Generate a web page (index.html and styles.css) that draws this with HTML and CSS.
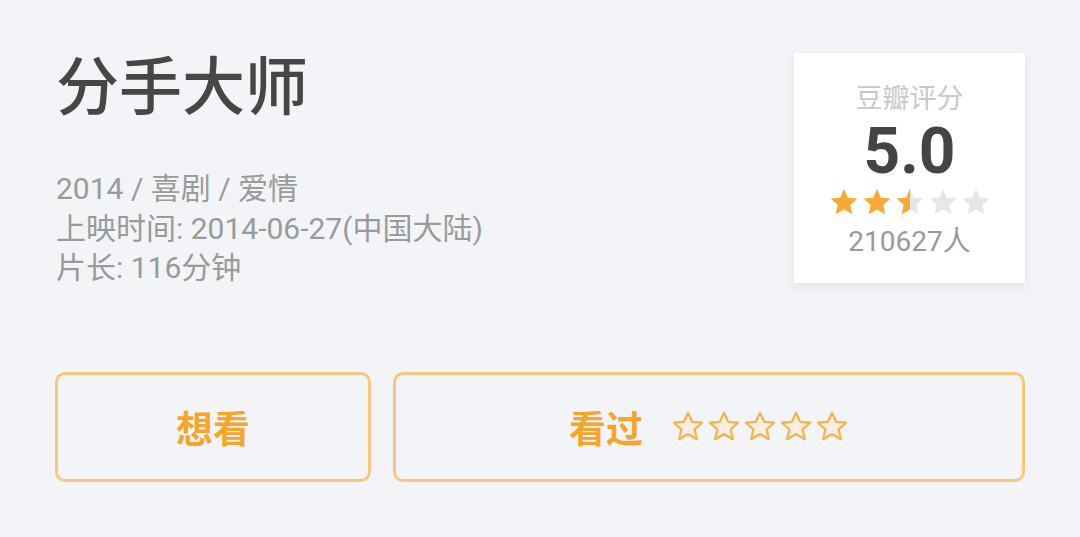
FILE: index.html
```html
<!DOCTYPE html>
<html lang="zh-CN">
<head>
<meta charset="utf-8">
<link rel="stylesheet" href="styles.css">
</head>
<body>
<div class="page">
  <div class="top">
    <div class="info">
      <h1 class="title">分手大师</h1>
      <div class="meta">
        <div class="meta-line">2014 / 喜剧 / 爱情</div>
        <div class="meta-line">上映时间: 2014-06-27(中国大陆)</div>
        <div class="meta-line">片长: 116分钟</div>
      </div>
    </div>
    <div class="card">
      <div class="card-label">豆瓣评分</div>
      <div class="card-score">5.0</div>
      <div class="card-stars">
        <svg class="cstar" viewBox="0 0 24 24"><path class="on" d="M12 1.5l3.1 7 7.6.7-5.7 5.1 1.7 7.5L12 17.9l-6.7 3.9 1.7-7.5L1.3 9.2l7.6-.7z"/></svg>
        <svg class="cstar" viewBox="0 0 24 24"><path class="on" d="M12 1.5l3.1 7 7.6.7-5.7 5.1 1.7 7.5L12 17.9l-6.7 3.9 1.7-7.5L1.3 9.2l7.6-.7z"/></svg>
        <svg class="cstar" viewBox="0 0 24 24"><path class="off" d="M12 1.5l3.1 7 7.6.7-5.7 5.1 1.7 7.5L12 17.9l-6.7 3.9 1.7-7.5L1.3 9.2l7.6-.7z"/><path class="on" d="M12 1.5V17.9l-6.7 3.9 1.7-7.5L1.3 9.2l7.6-.7z"/></svg>
        <svg class="cstar" viewBox="0 0 24 24"><path class="off" d="M12 1.5l3.1 7 7.6.7-5.7 5.1 1.7 7.5L12 17.9l-6.7 3.9 1.7-7.5L1.3 9.2l7.6-.7z"/></svg>
        <svg class="cstar" viewBox="0 0 24 24"><path class="off" d="M12 1.5l3.1 7 7.6.7-5.7 5.1 1.7 7.5L12 17.9l-6.7 3.9 1.7-7.5L1.3 9.2l7.6-.7z"/></svg>
      </div>
      <div class="card-count">210627人</div>
    </div>
  </div>
  <div class="actions">
    <div class="btn btn-want"><span class="btn-text">想看</span></div>
    <div class="btn btn-seen">
      <span class="btn-text">看过</span>
      <span class="rate">
        <svg class="rstar" viewBox="0 0 32 32"><path d="M16 2.5l3.9 8.6 9.4.9-7.1 6.3 2.1 9.2L16 22.7l-8.3 4.8 2.1-9.2-7.1-6.3 9.4-.9z"/></svg>
        <svg class="rstar" viewBox="0 0 32 32"><path d="M16 2.5l3.9 8.6 9.4.9-7.1 6.3 2.1 9.2L16 22.7l-8.3 4.8 2.1-9.2-7.1-6.3 9.4-.9z"/></svg>
        <svg class="rstar" viewBox="0 0 32 32"><path d="M16 2.5l3.9 8.6 9.4.9-7.1 6.3 2.1 9.2L16 22.7l-8.3 4.8 2.1-9.2-7.1-6.3 9.4-.9z"/></svg>
        <svg class="rstar" viewBox="0 0 32 32"><path d="M16 2.5l3.9 8.6 9.4.9-7.1 6.3 2.1 9.2L16 22.7l-8.3 4.8 2.1-9.2-7.1-6.3 9.4-.9z"/></svg>
        <svg class="rstar" viewBox="0 0 32 32"><path d="M16 2.5l3.9 8.6 9.4.9-7.1 6.3 2.1 9.2L16 22.7l-8.3 4.8 2.1-9.2-7.1-6.3 9.4-.9z"/></svg>
      </span>
    </div>
  </div>
</div>
</body>
</html>
```

FILE: styles.css
```css
html, body {
  margin: 0;
  padding: 0;
  background: #f3f4f8;
}
body {
  width: 1080px;
  height: 537px;
  overflow: hidden;
  font-family: Roboto, "Noto Sans CJK SC", sans-serif;
}
.page {
  padding: 0 55px;
}
.top {
  display: flex;
  justify-content: space-between;
  align-items: flex-start;
}
.info {
  padding-left: 1px;
}
.title {
  margin: 40px 0 0 0;
  font-family: "Noto Sans CJK SC", sans-serif;
  font-size: 63px;
  font-weight: 500;
  line-height: 84px;
  color: #464646;
}
.meta {
  margin-top: 45px;
  font-size: 30px;
  line-height: 39.5px;
  color: #9a9a9a;
}
.card {
  margin-top: 53px;
  width: 231px;
  height: 230px;
  background: #ffffff;
  box-shadow: 0 3px 10px rgba(0, 0, 0, 0.08);
  display: flex;
  flex-direction: column;
  align-items: center;
  box-sizing: border-box;
  padding-top: 24px;
}
.card-label {
  font-family: "Noto Sans CJK SC", sans-serif;
  font-size: 27px;
  line-height: 40px;
  color: #c8c8c8;
}
.card-score {
  font-family: Roboto, sans-serif;
  font-size: 64px;
  font-weight: 700;
  line-height: 62px;
  color: #444444;
  margin-top: 4px;
}
.card-stars {
  display: flex;
  gap: 3px;
  margin-top: 4px;
}
.cstar {
  width: 30px;
  height: 30px;
  display: block;
}
.cstar .on { fill: #f8a932; }
.cstar .off { fill: #e6e6e6; }
.card-count {
  font-family: Roboto, "Noto Sans CJK SC", sans-serif;
  font-size: 28px;
  line-height: 36px;
  color: #9a9a9a;
  margin-top: 7px;
}
.actions {
  display: flex;
  gap: 22px;
  margin-top: 84px;
}
.btn {
  height: 110px;
  box-sizing: border-box;
  border: 3px solid #f6c77c;
  border-radius: 10px;
  display: flex;
  align-items: center;
  justify-content: center;
}
.btn-want {
  width: 316px;
}
.btn-seen {
  flex: 1;
  gap: 28px;
}
.btn-text {
  font-family: "Noto Sans CJK SC", sans-serif;
  font-size: 37px;
  font-weight: 700;
  color: #f5a628;
}
.rate {
  display: flex;
  gap: 2px;
}
.rstar {
  width: 34px;
  height: 34px;
  display: block;
}
.rstar path {
  fill: #f8eee2;
  stroke: #f0b652;
  stroke-width: 2.2;
  stroke-linejoin: round;
}
```
